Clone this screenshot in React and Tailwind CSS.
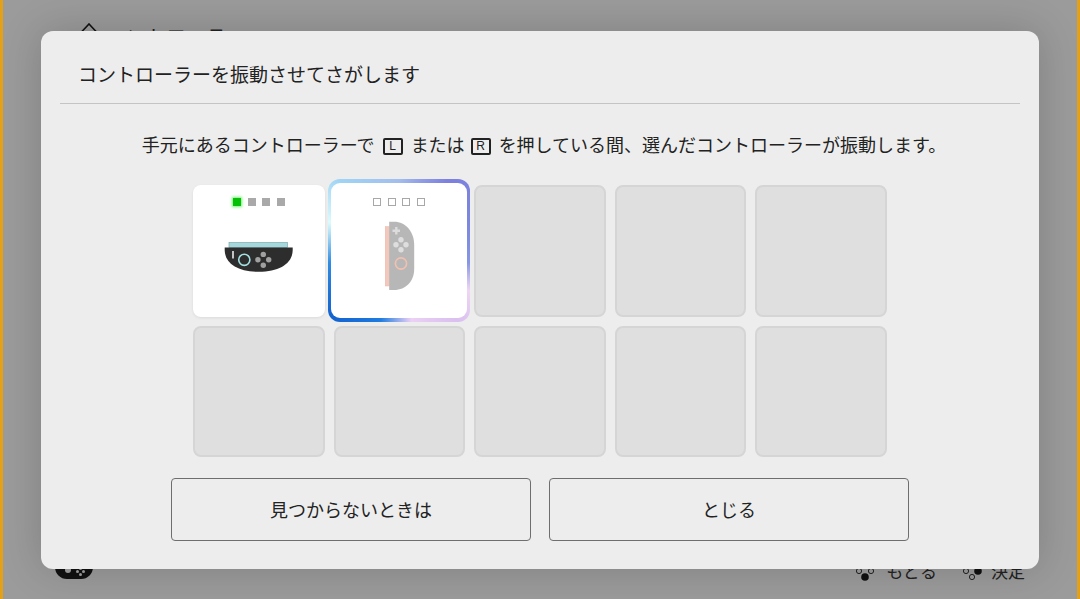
import {Fragment} from "react";

const FONT = "font-['Noto_Sans_CJK_JP','Noto_Sans',sans-serif]";

// the four dots of the button cluster; filled says which one is lit
const ButtonDots = ({filled}) => (
    <svg width="20" height="20" viewBox="0 0 20 20" className="shrink-0">
        {[[10, 4, "top"], [4, 10, "left"], [16, 10, "right"], [10, 16, "bottom"]].map(([cx, cy, name]) => (
            name === filled
                ? <circle key={name} cx={cx} cy={cy} r="3.8" fill="#111" />
                : <circle key={name} cx={cx} cy={cy} r="2.6" fill="none" stroke="#222" strokeWidth="1" />
        ))}
    </svg>
);

const KeyCap = ({label, className}) => (
    <span className={`${className} inline-flex h-[17px] w-[20px] translate-y-[-1px] items-center justify-center rounded-[2px] border-2 border-[#222] align-middle font-['Liberation_Sans',sans-serif] text-[12px] leading-none`}>
        {label}
    </span>
);

const Leds = ({lit}) => (
    <div className="flex justify-center gap-[6.5px] pt-[13px]">
        {[0, 1, 2, 3].map((i) => {
            if (lit === undefined) {
                return <span key={i} className="size-[8px] border border-[#a8a8a8] bg-white" />;
            }
            return i === lit
                ? <span key={i} className="size-[8px] bg-[#04c006] shadow-[0_0_3px_1px_#6ff06f]" />
                : <span key={i} className="size-[8px] bg-[#a9a9a9]" />;
        })}
    </div>
);

const HorizontalJoycon = () => (
    <svg width="70" height="32" viewBox="0 0 70 32" className="mx-auto mt-[35px] block">
        <rect x="5" y="1.5" width="58.5" height="5" fill="#a4d8dc" stroke="#7fa8ac" strokeWidth="0.7" />
        <path d="M0.7 6.5 H68.7 V9 C68.7 22 56 30.8 34.7 30.8 C13 30.8 0.7 22 0.7 9 Z" fill="#2d2d2d" />
        <rect x="8" y="10" width="2" height="7.5" fill="#c4c4c4" />
        <circle cx="20.3" cy="18.8" r="5.6" fill="none" stroke="#a4e0e2" strokeWidth="1.6" />
        <circle cx="39.3" cy="13.4" r="2.7" fill="#a0a0a0" />
        <circle cx="33.9" cy="18.8" r="2.7" fill="#a0a0a0" />
        <circle cx="44.7" cy="18.8" r="2.7" fill="#a0a0a0" />
        <circle cx="39.3" cy="24.2" r="2.7" fill="#a0a0a0" />
    </svg>
);

const VerticalJoycon = () => (
    <svg width="30" height="70" viewBox="0 0 30 70" className="ml-[54px] mt-[15px] block">
        <rect x="0" y="5.5" width="4.5" height="59.5" fill="#f3c8bc" stroke="#eeb9ab" strokeWidth="0.5" />
        <path d="M4.2 0.7 H9 C21 0.7 29.2 11 29.2 24 V48 C29.2 60 21 69 9 69 H4.2 Z" fill="#b7b7b7" />
        <path d="M11.3 6 V13.5 M7.5 9.7 H15" stroke="#dcdcdc" strokeWidth="2.4" />
        <circle cx="16" cy="18.7" r="2.7" fill="#dedede" />
        <circle cx="11" cy="23.7" r="2.7" fill="#dedede" />
        <circle cx="21" cy="23.7" r="2.7" fill="#dedede" />
        <circle cx="16" cy="28.7" r="2.7" fill="#dedede" />
        <circle cx="16" cy="42.5" r="5.6" fill="none" stroke="#f3c0b0" strokeWidth="1.6" />
    </svg>
);

const EmptySlot = () => (
    <div className="h-[131.6px] rounded-[8px] border-2 border-[#d5d5d5] bg-[#dfdfdf]" />
);

export default function App() {
    return (
        <div className={`${FONT} relative flex h-[599px] w-[1080px] flex-col justify-between overflow-hidden border-x-[3px] border-[#e2a116] bg-[#9b9b9b] text-[#222]`}>
            {/* page behind the dialog */}
            <div className="flex items-start gap-[8px] pl-[77px] pt-[23px]">
                <svg width="18" height="12" viewBox="0 0 18 12">
                    <path d="M1 9.5 L9 1 L17 9.5" fill="none" stroke="#111" strokeWidth="1.6" />
                </svg>
                <span className="text-[20px] leading-[28px]">コントローラー</span>
            </div>
            <div className="flex items-center justify-between pb-[16px] pl-[52px] pr-[52px]">
                <div className="relative mb-[4px] h-[20px] w-[38px] rounded-b-[12px] bg-[#111]">
                    <span className="absolute left-[10px] top-[8px] size-[6px] rounded-full bg-[#a0a0a0]" />
                    <span className="absolute left-[24px] top-[8px] size-[3px] rounded-full bg-[#a0a0a0]" />
                    <span className="absolute left-[21px] top-[11px] size-[3px] rounded-full bg-[#a0a0a0]" />
                    <span className="absolute left-[27px] top-[11px] size-[3px] rounded-full bg-[#a0a0a0]" />
                    <span className="absolute left-[24px] top-[14px] size-[3px] rounded-full bg-[#a0a0a0]" />
                </div>
                <div className="flex items-center text-[17px] leading-[24px]">
                    <ButtonDots filled="bottom" />
                    <span className="ml-[11px] mr-[25px]">もどる</span>
                    <ButtonDots filled="right" />
                    <span className="ml-[9px]">決定</span>
                </div>
            </div>

            {/* dialog */}
            <div className="absolute left-[38px] top-[31px] h-[538px] w-[998px] rounded-[12px] bg-[#ededed] shadow-[0_0_40px_rgba(0,0,0,0.18)]">
                <div className="mx-[19px] flex h-[73px] items-center border-b border-[#c4c4c4] pl-[18px] pt-[14px] text-[19px] leading-[26px]">
                    コントローラーを振動させてさがします
                </div>
                <p className="pl-[8px] pt-[27px] text-center text-[18px] leading-[26px]">
                    手元にあるコントローラーで<KeyCap label="L" className="mx-[8px]" />または<KeyCap label="R" className="ml-[6px] mr-[8px]" />を押している間、選んだコントローラーが振動します。
                </p>
                <div className="mx-auto mt-[28px] grid w-[694px] grid-cols-5 gap-[9px]">
                    <div className="h-[131.6px] rounded-[8px] bg-white shadow-[0_1px_3px_rgba(0,0,0,0.08)]">
                        <Leds lit={0} />
                        <HorizontalJoycon />
                    </div>
                    <div className="-mb-[5px] -ml-[6px] -mr-[5px] -mt-[6px] h-[142.6px] rounded-[12px] bg-[conic-gradient(#a3bdec_0deg,#7d80de_35deg,#7b88dd_70deg,#8796e4_100deg,#efd6f3_120deg,#d9c0ef_140deg,#ecd0f5_170deg,#1f7ce0_195deg,#1463cf_225deg,#2f8ce2_260deg,#dcfbfc_292deg,#9fd3f4_320deg,#a3bdec_360deg)] p-[3.5px]">
                        <div className="h-full rounded-[9px] bg-white">
                            <div className="pt-[2px]">
                                <Leds />
                            </div>
                            <VerticalJoycon />
                        </div>
                    </div>
                    {Array.from({length: 8}).map((_, i) => (
                        <Fragment key={i}>
                            <EmptySlot />
                        </Fragment>
                    ))}
                </div>
                <div className="mt-[21px] flex justify-center gap-[18px]">
                    <button className="h-[63px] w-[360px] rounded-[4px] border border-[#6e6e6e] text-[18px]">見つからないときは</button>
                    <button className="h-[63px] w-[360px] rounded-[4px] border border-[#6e6e6e] text-[18px]">とじる</button>
                </div>
            </div>
        </div>
    );
}
